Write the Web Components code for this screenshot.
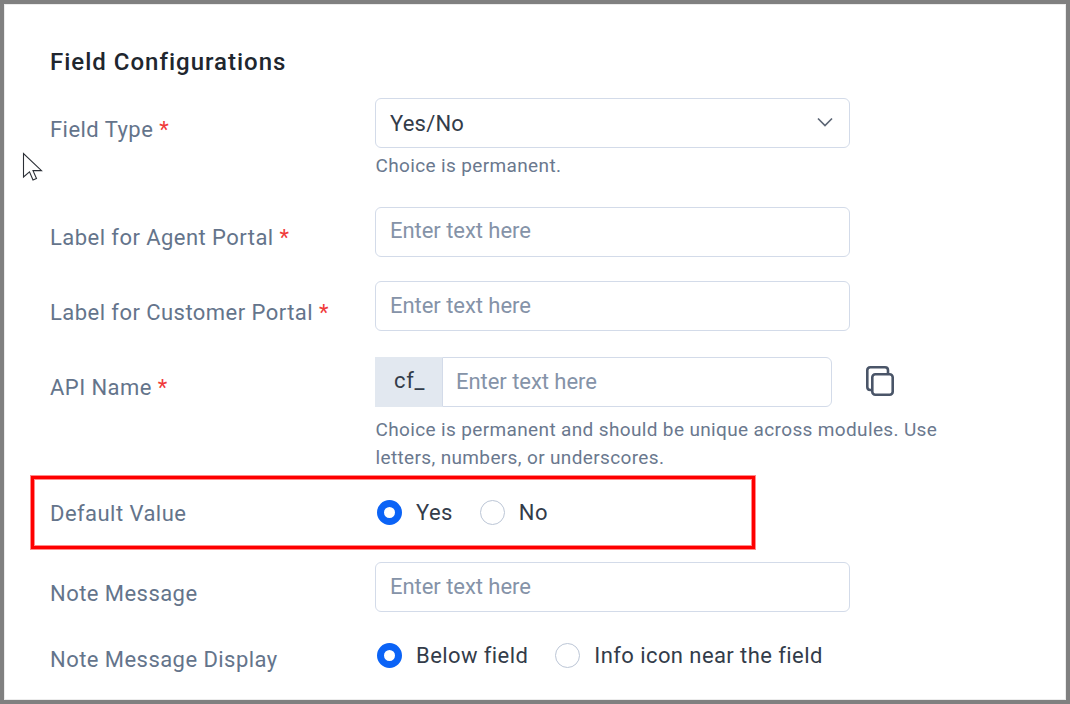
<!DOCTYPE html>
<html>
<head>
<meta charset="utf-8">
<title>Field Configurations</title>
<style>
html, body { margin: 0; height: 100%; }
body { font-family: Roboto, "Liberation Sans", sans-serif; }
</style>
</head>
<body>
<config-panel>
    <h-title>Field Configurations</h-title>

    <form-row label="Field Type" required style="--top: 20px; --label-top: 17px">
        <select-box value="Yes/No"></select-box>
        <hint-text>Choice is permanent.</hint-text>
    </form-row>
    <form-row label="Label for Agent Portal" required style="--top: 27px">
        <text-box></text-box>
    </form-row>
    <form-row label="Label for Customer Portal" required style="--top: 24px; --label-top: 17px; --text-line: 48px">
        <text-box></text-box>
    </form-row>
    <form-row label="API Name" required style="--top: 26px">
        <prefix-box prefix="cf_"></prefix-box>
        <hint-text style="--hint-top: 9px">Choice is permanent and should be unique across modules. Use letters, numbers, or underscores.</hint-text>
    </form-row>
    <form-row label="Default Value" plain style="--top: 25px; --label-top: 2px">
        <radio-group>
            <radio-option checked>Yes</radio-option>
            <radio-option>No</radio-option>
        </radio-group>
    </form-row>
    <form-row label="Note Message" style="--top: 33px; --label-top: 17px; --text-line: 47px">
        <text-box></text-box>
    </form-row>
    <form-row label="Note Message Display" plain style="--top: 28px; --label-top: 5px">
        <radio-group>
            <radio-option checked>Below field</radio-option>
            <radio-option>Info icon near the field</radio-option>
        </radio-group>
    </form-row>

    <svg slot="overlay" class="cursor" width="22" height="30" viewBox="0 0 22 30" style="position:absolute;left:22px;top:152px">
        <path d="M1.5 1.5V25L7.5 19.8L11 28L14.5 26.5L11 18.6H19.5Z" fill="#fff" stroke="#2b2f36" stroke-width="1.1" stroke-linejoin="miter"/>
    </svg>
    <div slot="overlay" style="position:absolute;left:31px;top:476px;width:724px;height:73px;box-sizing:border-box;border:3px solid #fe0000;box-shadow:0 0 0 1px #ff8a8a, inset 0 0 0 1px #ff8a8a"></div>
</config-panel>

<script>
class ConfigPanel extends HTMLElement {
    constructor() {
        super();
        this.attachShadow({mode: 'open'}).innerHTML = `
<style>
:host {
    display: block;
    position: relative;
    box-sizing: border-box;
    height: 704px;
    overflow: hidden;
    background: #fff;
    border: 4px solid #808080;
    box-shadow: inset 0 0 0 1px #ececec;
}
.body {
    padding: 42px 0 0 46px;
}
.layer {
    position: absolute;
    left: -4px;
    top: -4px;
}
</style>
<div class="body"><slot></slot></div>
<div class="layer"><slot name="overlay"></slot></div>
`;
    }
}

class HTitle extends HTMLElement {
    constructor() {
        super();
        this.attachShadow({mode: 'open'}).innerHTML = `
<style>
:host {
    display: block;
    font-size: 24px;
    line-height: 32px;
    font-weight: 500;
    letter-spacing: 1px;
    color: #20262e;
}
</style>
<slot></slot>
`;
    }
}

class FormRow extends HTMLElement {
    constructor() {
        super();
        const star = this.hasAttribute('required') ? '<span class="star">*</span>' : '';
        this.attachShadow({mode: 'open'}).innerHTML = `
<style>
:host {
    display: grid;
    grid-template-columns: 325px 475px;
    margin-top: var(--top, 0);
}
.label {
    padding-top: var(--label-top, 16px);
    font-size: 22px;
    line-height: 30px;
    letter-spacing: .45px;
    color: #64748b;
}
.star {
    color: #f03a3a;
}
</style>
<div class="label">${this.getAttribute('label')} ${star}</div>
<div class="field"><slot></slot></div>
`;
    }
}

const boxCss = `
:host {
    display: block;
    box-sizing: border-box;
    height: 50px;
    border: 1.5px solid #d3dbe9;
    border-radius: 6px;
    background: #fff;
    font-size: 22px;
}
`;

class TextBox extends HTMLElement {
    constructor() {
        super();
        this.attachShadow({mode: 'open'}).innerHTML = `
<style>${boxCss}
div {
    padding: 0 14px;
    line-height: var(--text-line, 46px);
    letter-spacing: -.05px;
    color: #8593a8;
}
</style>
<div>Enter text here</div>
`;
    }
}

class SelectBox extends HTMLElement {
    constructor() {
        super();
        this.attachShadow({mode: 'open'}).innerHTML = `
<style>${boxCss}
:host {
    display: flex;
    align-items: center;
    justify-content: space-between;
    padding: 0 16px 0 14px;
    letter-spacing: .2px;
    color: #333c4a;
}
span { line-height: 46px; margin-top: 1px; }
svg { margin-top: -2px; }
</style>
<span>${this.getAttribute('value')}</span>
<svg width="16" height="10" viewBox="0 0 16 10" fill="none" stroke="#5d6675" stroke-width="1.7"><path d="M1 1.5L8 8.5L15 1.5"/></svg>
`;
    }
}

class PrefixBox extends HTMLElement {
    constructor() {
        super();
        this.attachShadow({mode: 'open'}).innerHTML = `
<style>
:host {
    display: flex;
    align-items: center;
    font-size: 22px;
}
.prefix {
    flex: none;
    box-sizing: border-box;
    width: 67px;
    height: 50px;
    padding-left: 2px;
    line-height: 48px;
    text-align: center;
    letter-spacing: .6px;
    background: #e2e8f0;
    color: #333c4a;
}
.input {
    flex: none;
    box-sizing: border-box;
    width: 390px;
    height: 50px;
    padding: 0 13px;
    line-height: 47px;
    letter-spacing: -.05px;
    border: 1.5px solid #d3dbe9;
    border-radius: 0 6px 6px 0;
    color: #8593a8;
}
svg { flex: none; margin-left: 34px; }
</style>
<div class="prefix">${this.getAttribute('prefix')}</div>
<div class="input">Enter text here</div>
<svg width="28" height="32" viewBox="0 0 28 32" fill="none" stroke="#4a5568" stroke-width="2.6" stroke-linejoin="round">
    <rect x="6.3" y="8.3" width="20.4" height="20.4" rx="3"/>
    <path d="M6.3 24H4.3Q1.3 24 1.3 21V4.3Q1.3 1.3 4.3 1.3H19Q22 1.3 22 4.3V8.3"/>
</svg>
`;
    }
}

class HintText extends HTMLElement {
    constructor() {
        super();
        this.attachShadow({mode: 'open'}).innerHTML = `
<style>
:host {
    display: block;
    width: 590px;
    margin-top: var(--hint-top, 4px);
    padding-left: .5px;
    font-size: 19px;
    line-height: 28px;
    letter-spacing: .36px;
    color: #6a788e;
}
</style>
<slot></slot>
`;
    }
}

class RadioGroup extends HTMLElement {
    constructor() {
        super();
        this.attachShadow({mode: 'open'}).innerHTML = `
<style>
:host {
    display: flex;
    align-items: center;
    gap: 25px;
    height: 30px;
    white-space: nowrap;
}
</style>
<slot></slot>
`;
    }
}

class RadioOption extends HTMLElement {
    constructor() {
        super();
        const dot = this.hasAttribute('checked') ? 'on' : '';
        this.attachShadow({mode: 'open'}).innerHTML = `
<style>
:host {
    display: flex;
    align-items: center;
    gap: 14px;
    margin-left: 2px;
    font-size: 22px;
    letter-spacing: .42px;
    color: #333c4a;
}
i {
    box-sizing: border-box;
    width: 25px;
    height: 25px;
    border-radius: 50%;
    border: 1.5px solid #bcc6d6;
    background: #fff;
}
i.on {
    border: 7px solid #0b63f6;
}
</style>
<i class="${dot}"></i><span><slot></slot></span>
`;
    }
}

customElements.define('config-panel', ConfigPanel);
customElements.define('h-title', HTitle);
customElements.define('form-row', FormRow);
customElements.define('text-box', TextBox);
customElements.define('select-box', SelectBox);
customElements.define('prefix-box', PrefixBox);
customElements.define('hint-text', HintText);
customElements.define('radio-group', RadioGroup);
customElements.define('radio-option', RadioOption);
</script>
</body>
</html>
